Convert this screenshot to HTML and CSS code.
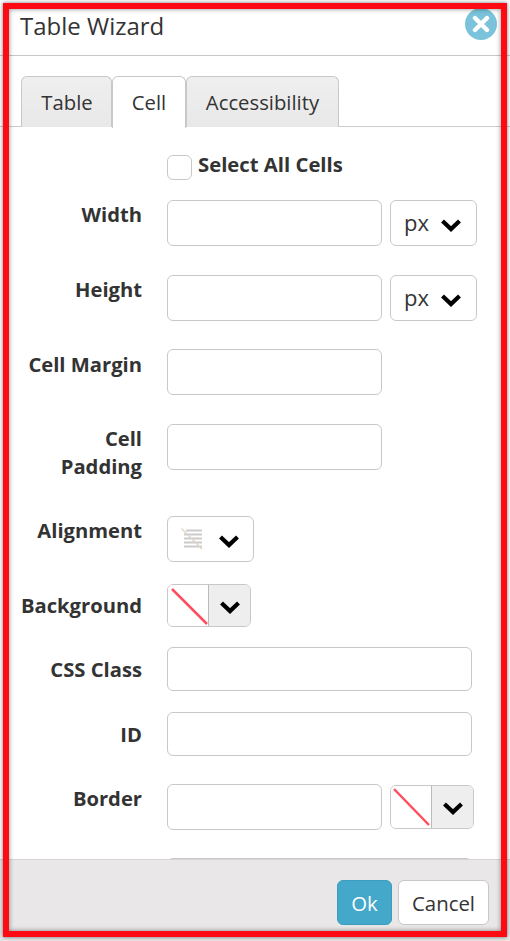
FILE: index.html
```html
<!DOCTYPE html>
<html lang="en">
<head>
  <meta charset="UTF-8" />
  <title>Table Wizard</title>
  <link rel="stylesheet" href="styles.css">
</head>
<body>

  <div class="dialog">
    <div class="header">
      <h1>Table Wizard</h1>
    </div>
    <button class="close" aria-label="Close">
      <svg width="18" height="18" viewBox="0 0 18 18"><path d="M3 3 L15 15 M15 3 L3 15" stroke="#fff" stroke-width="4.4" stroke-linecap="round"/></svg>
    </button>

    <div class="tabs">
      <div class="tab tab-table">Table</div>
      <div class="tab tab-cell active">Cell</div>
      <div class="tab tab-access">Accessibility</div>
    </div>

    <div class="content">
      <div class="select-all">
        <span class="checkbox"></span>
        <label>Select All Cells</label>
      </div>

      <div class="row row-75">
        <label>Width</label>
        <input type="text" class="field">
        <div class="unit">px <svg class="chev" viewBox="0 -2 20 14"><path d="M1.5 3 L10 11 L18.5 3" fill="none" stroke="#000" stroke-width="4.2"/></svg></div>
      </div>
      <div class="row row-74">
        <label>Height</label>
        <input type="text" class="field">
        <div class="unit">px <svg class="chev" viewBox="0 -2 20 14"><path d="M1.5 3 L10 11 L18.5 3" fill="none" stroke="#000" stroke-width="4.2"/></svg></div>
      </div>
      <div class="row row-75 label-margin">
        <label>Cell Margin</label>
        <input type="text" class="field">
      </div>
      <div class="row row-92">
        <label>Cell<br>Padding</label>
        <input type="text" class="field">
      </div>
      <div class="row row-68">
        <label>Alignment</label>
        <div class="align-select">
          <svg width="24" height="22" viewBox="0 0 24 22">
            <path d="M5 2.5 H21 M3 6.5 H21 M3 10.5 H21 M3 14.5 H21 M3 18.5 H21" stroke="#cbcbcb" stroke-width="2"/>
            <path d="M0.5 0.5 L21 21" stroke="#e0d6c8" stroke-width="1.4"/>
          </svg>
          <svg class="chev" viewBox="0 -2 20 14"><path d="M1.5 3 L10 11 L18.5 3" fill="none" stroke="#000" stroke-width="4.2"/></svg>
        </div>
      </div>
      <div class="row row-63 label-bg">
        <label>Background</label>
        <div class="color-select">
          <div class="swatch"><svg width="40" height="41" viewBox="0 0 40 41"><path d="M4 4 L39 39" stroke="#ff4d5e" stroke-width="2.5"/></svg></div>
          <div class="color-arrow"><svg class="chev" viewBox="0 -1 20 14"><path d="M1.5 3 L10 11 L18.5 3" fill="none" stroke="#000" stroke-width="4.2"/></svg></div>
        </div>
      </div>
      <div class="row row-65 label-low">
        <label>CSS Class</label>
        <input type="text" class="field field-wide">
      </div>
      <div class="row row-72 label-low">
        <label>ID</label>
        <input type="text" class="field field-wide">
      </div>
      <div class="row row-74">
        <label>Border</label>
        <input type="text" class="field">
        <div class="color-select color-border">
          <div class="swatch"><svg width="40" height="41" viewBox="0 0 40 41"><path d="M3 3 L38 39" stroke="#ff4d5e" stroke-width="2.5"/></svg></div>
          <div class="color-arrow"><svg class="chev" viewBox="0 -1 20 14"><path d="M1.5 3 L10 11 L18.5 3" fill="none" stroke="#000" stroke-width="4.2"/></svg></div>
        </div>
      </div>
      <div class="row">
        <label></label>
        <input type="text" class="field field-last">
      </div>
    </div>

    <div class="footer">
      <button class="btn btn-ok">Ok</button>
      <button class="btn btn-cancel">Cancel</button>
    </div>
  </div>

  <!-- red annotation drawn over the screenshot -->
  <div class="frame"></div>

</body>
</html>
```

FILE: styles.css
```css
* {
  box-sizing: border-box;
}
html, body {
  height: 100%;
}
body {
  margin: 0;
  font-family: "Open Sans", Arial, sans-serif;
  color: #333;
  background: #fff;
  overflow: hidden;
}
.dialog {
  position: relative;
  height: 941px;
  overflow: hidden;
}
.header {
  height: 56px;
  padding: 8px 0 0 20px;
  border-bottom: 1px solid #c8c8c8;
}
h1 {
  margin: 0;
  font-size: 24px;
  font-weight: 400;
  line-height: 36px;
}
.close {
  position: absolute;
  top: 8px;
  left: 465px;
  width: 32px;
  height: 32px;
  padding: 0;
  border: none;
  border-radius: 50%;
  background: #7bc3da;
  display: flex;
  align-items: center;
  justify-content: center;
}
.tabs {
  display: flex;
  height: 71px;
  padding: 20px 0 0 21px;
  border-bottom: 1px solid #ccc;
}
.tab {
  height: 51px;
  font-size: 20.3px;
  line-height: 50px;
  text-align: center;
  background: linear-gradient(#f0efef, #e9e8e8);
  border: 1px solid #c8c8c8;
  border-bottom: none;
  border-radius: 6px 6px 0 0;
}
.tab-table {
  width: 91px;
  padding-left: 1px;
}
.tab-cell {
  width: 74px;
}
.tab-access {
  width: 153px;
}
.tab.active {
  height: 52px;
  background: #fff;
  position: relative;
}
.content {
  height: 732px;
  overflow: hidden;
}
.select-all {
  display: flex;
  align-items: flex-start;
  height: 25px;
  margin: 28px 0 20px 167px;
}
.checkbox {
  width: 25px;
  height: 25px;
  border: 1px solid #c8c8c8;
  border-radius: 6px;
  margin-right: 6px;
}
.select-all label {
  font-size: 20.3px;
  font-weight: 700;
  line-height: 19px;
}
.row {
  display: flex;
  align-items: flex-start;
}
.row label {
  width: 142px;
  margin-right: 25px;
  flex: none;
  font-size: 20.2px;
  font-weight: 700;
  line-height: 28px;
  text-align: right;
}
.label-margin label {
  padding-top: 1px;
}
.label-bg label {
  padding-top: 7px;
}
.label-low label {
  padding-top: 8px;
}
.row-75 {
  height: 75px;
}
.row-92 {
  height: 92px;
}
.row-68 {
  height: 68px;
}
.row-63 {
  height: 63px;
}
.row-65 {
  height: 65px;
}
.row-72 {
  height: 72px;
}
.row-74 {
  height: 74px;
}
.field {
  width: 215px;
  height: 46px;
  padding: 0 10px;
  border: 1px solid #c8c8c8;
  border-radius: 6px;
  background: #fff;
  flex: none;
}
.field-wide {
  width: 305px;
  height: 44px;
}
.field-last {
  width: 305px;
}
.unit {
  width: 87px;
  height: 46px;
  margin-left: 8px;
  padding: 0 15px 2px 13px;
  display: flex;
  align-items: center;
  justify-content: space-between;
  font-size: 22px;
  border: 1px solid #c8c8c8;
  border-radius: 6px;
}
.chev {
  width: 20px;
  height: 14px;
  flex: none;
  overflow: visible;
}
.unit .chev {
  margin-top: 2px;
}
.align-select {
  width: 87px;
  height: 46px;
  display: flex;
  align-items: center;
  padding-left: 13px;
  border: 1px solid #c8c8c8;
  border-radius: 6px;
  gap: 14px;
}
.color-select {
  width: 84px;
  height: 43px;
  display: flex;
  border: 1px solid #c8c8c8;
  border-radius: 6px;
  overflow: hidden;
}
.swatch {
  width: 41px;
  border-right: 1px solid #bbb;
  background: #fff;
}
.color-arrow {
  flex: 1;
  background: #eee;
  display: flex;
  align-items: center;
  justify-content: center;
}
.color-border {
  height: 44px;
  margin: 1px 0 0 8px;
}
.footer {
  height: 82px;
  padding: 20px 21px 0 0;
  display: flex;
  justify-content: flex-end;
  align-items: flex-start;
  gap: 6px;
  background: #e9e7e8;
  border-top: 1px solid #d4d4d4;
}
.btn {
  height: 45px;
  font-family: inherit;
  font-size: 20.4px;
  border-radius: 6px;
  padding: 0;
}
.btn-ok {
  width: 55px;
  color: #fff;
  background: #43a8c9;
  border: 1px solid #3c9dbd;
}
.btn-cancel {
  width: 91px;
  color: #333;
  background: #fff;
  border: 1px solid #c8c8c8;
}
.frame {
  position: absolute;
  top: 3px;
  left: 3px;
  width: 504px;
  height: 934px;
  border: 6px solid #fe0a12;
  box-shadow: 0 0 4px rgba(0,0,0,0.55), inset 0 0 5px rgba(0,0,0,0.45);
  pointer-events: none;
}
```
